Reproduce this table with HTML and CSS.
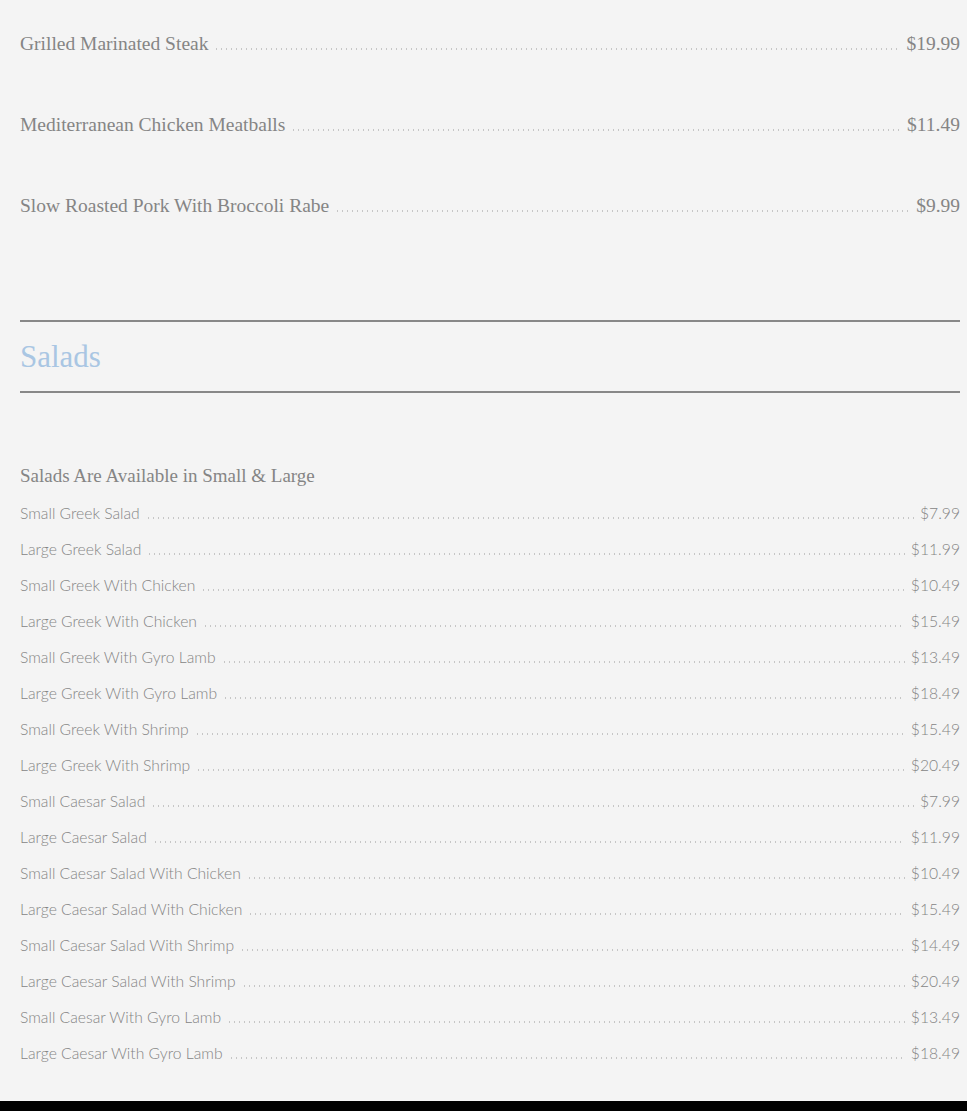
FILE: index.html
```html
<!DOCTYPE html>
<html lang="en">
<head>
    <meta charset="UTF-8">
    <meta name="viewport" content="width=device-width, initial-scale=1.0">
    <title>Menu</title>
    <link rel="stylesheet" href="styles.css">
</head>
<body>
    <div class="menu">
        <div class="entrees">
            <div class="dish"><span class="name">Grilled Marinated Steak</span><span class="dots"></span><span class="price">$19.99</span></div>
            <div class="dish"><span class="name">Mediterranean Chicken Meatballs</span><span class="dots"></span><span class="price">$11.49</span></div>
            <div class="dish"><span class="name">Slow Roasted Pork With Broccoli Rabe</span><span class="dots"></span><span class="price">$9.99</span></div>
        </div>

        <h2 class="section-title">Salads</h2>

        <div class="salads">
            <h3 class="note">Salads Are Available in Small &amp; Large</h3>
            <div class="item"><span class="name">Small Greek Salad</span><span class="dots"></span><span class="price">$7.99</span></div>
            <div class="item"><span class="name">Large Greek Salad</span><span class="dots"></span><span class="price">$11.99</span></div>
            <div class="item"><span class="name">Small Greek With Chicken</span><span class="dots"></span><span class="price">$10.49</span></div>
            <div class="item"><span class="name">Large Greek With Chicken</span><span class="dots"></span><span class="price">$15.49</span></div>
            <div class="item"><span class="name">Small Greek With Gyro Lamb</span><span class="dots"></span><span class="price">$13.49</span></div>
            <div class="item"><span class="name">Large Greek With Gyro Lamb</span><span class="dots"></span><span class="price">$18.49</span></div>
            <div class="item"><span class="name">Small Greek With Shrimp</span><span class="dots"></span><span class="price">$15.49</span></div>
            <div class="item"><span class="name">Large Greek With Shrimp</span><span class="dots"></span><span class="price">$20.49</span></div>
            <div class="item"><span class="name">Small Caesar Salad</span><span class="dots"></span><span class="price">$7.99</span></div>
            <div class="item"><span class="name">Large Caesar Salad</span><span class="dots"></span><span class="price">$11.99</span></div>
            <div class="item"><span class="name">Small Caesar Salad With Chicken</span><span class="dots"></span><span class="price">$10.49</span></div>
            <div class="item"><span class="name">Large Caesar Salad With Chicken</span><span class="dots"></span><span class="price">$15.49</span></div>
            <div class="item"><span class="name">Small Caesar Salad With Shrimp</span><span class="dots"></span><span class="price">$14.49</span></div>
            <div class="item"><span class="name">Large Caesar Salad With Shrimp</span><span class="dots"></span><span class="price">$20.49</span></div>
            <div class="item"><span class="name">Small Caesar With Gyro Lamb</span><span class="dots"></span><span class="price">$13.49</span></div>
            <div class="item"><span class="name">Large Caesar With Gyro Lamb</span><span class="dots"></span><span class="price">$18.49</span></div>
        </div>
    </div>
    <footer class="footer"></footer>
</body>
</html>
```

FILE: styles.css
```css
body {
    margin: 0;
    background: #f4f4f4;
    color: #858585;
    font-family: 'Lato', sans-serif;
}
.menu {
    padding: 30px 7px 30px 20px;
}
.dish, .item {
    display: flex;
    align-items: baseline;
}
.dish {
    font-family: 'Liberation Serif', serif;
    font-size: 19.5px;
    line-height: 28px;
    margin-bottom: 53px;
}
.dish:last-child {
    margin-bottom: 0;
}
.item {
    font-size: 15.7px;
    font-weight: 300;
    line-height: 36px;
}
.dots {
    flex: 1;
    height: 2px;
    margin: 0 6px;
    background: radial-gradient(circle, #c6c6c6 0.9px, transparent 1.1px) 0 0 / 5px 2px repeat-x;
}
.section-title {
    margin: 100px 0 0;
    border-top: 2px solid #888;
    border-bottom: 2px solid #888;
    font-family: 'Liberation Serif', serif;
    font-weight: normal;
    font-size: 31px;
    line-height: 69px;
    color: #a9c6e3;
}
.salads {
    padding-top: 69px;
}
.note {
    margin: 0 0 5px;
    font-family: 'Liberation Serif', serif;
    font-weight: normal;
    font-size: 19px;
    line-height: 28px;
}
.footer {
    height: 10px;
    background: #000;
}
```
